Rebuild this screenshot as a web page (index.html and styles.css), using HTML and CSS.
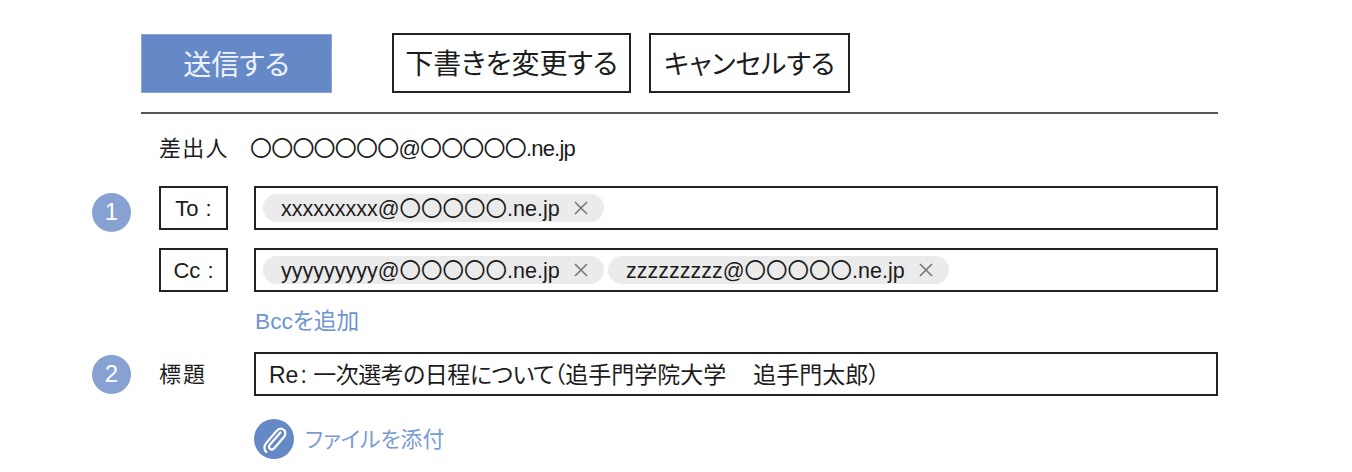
FILE: index.html
```html
<!DOCTYPE html>
<html lang="ja">
<head>
<meta charset="utf-8">
<title>メール</title>
<link rel="stylesheet" href="styles.css">
</head>
<body>
<main class="page">
  <div class="toolbar">
    <button class="btn btn-primary">送信する</button>
    <button class="btn btn-draft">下書きを変更する</button>
    <button class="btn btn-cancel">キャンセルする</button>
  </div>
  <div class="sender">
    <span class="sender-label">差出人</span>
    <span class="sender-value">〇〇〇〇〇〇〇@〇〇〇〇〇.ne.jp</span>
  </div>
  <div class="row row-to">
    <span class="badge badge-low">1</span>
    <span class="label label-box"><span class="label-text">To<span class="colon">:</span></span></span>
    <div class="field">
      <span class="chip"><span class="chip-text">xxxxxxxxx@〇〇〇〇〇.ne.jp</span><svg class="chip-x" viewBox="0 0 14 14"><path d="M1 1 13 13M13 1 1 13"/></svg></span>
    </div>
  </div>
  <div class="row row-cc">
    <span class="badge badge-empty"></span>
    <span class="label label-box"><span class="label-text">Cc<span class="colon">:</span></span></span>
    <div class="field">
      <span class="chip"><span class="chip-text">yyyyyyyyy@〇〇〇〇〇.ne.jp</span><svg class="chip-x" viewBox="0 0 14 14"><path d="M1 1 13 13M13 1 1 13"/></svg></span>
      <span class="chip"><span class="chip-text">zzzzzzzzz@〇〇〇〇〇.ne.jp</span><svg class="chip-x" viewBox="0 0 14 14"><path d="M1 1 13 13M13 1 1 13"/></svg></span>
    </div>
  </div>
  <a class="bcc">Bccを追加</a>
  <div class="row row-subject">
    <span class="badge">2</span>
    <span class="label label-plain"><span class="label-lift">標題</span></span>
    <div class="field field-subject"><span class="subject-text">Re<span class="subject-colon">:</span> <span class="subject-kana">一次選考の日程について</span>（追手門学院大学　<span class="subject-name">追手門太郎</span>）</span></div>
  </div>
  <div class="attach">
    <span class="attach-icon">
      <svg viewBox="0 0 40 40"><path d="M26.500 13.500 16 25.500c-1.600 1.900-1 3.600 0 4.400 1.200 1 3 .9 4.500-.8l9-10.600c2.600-3 2.300-5.900.3-7.600-2.200-1.800-5-1.500-7.500 1.400l-9.800 11.300c-3 3.500-2.700 7.300-.1 9.500"/></svg>
    </span>
    <span class="attach-text">ファイルを添付</span>
  </div>
</main>
</body>
</html>
```
FILE: styles.css
```css
* { box-sizing: border-box; }
html, body { margin: 0; padding: 0; background: #fff; }
body {
  width: 1352px;
  height: 472px;
  overflow: hidden;
  font-family: "Liberation Sans", "Noto Sans CJK JP", sans-serif;
  font-feature-settings: "palt";
  color: #1c1c1c;
}
.page {
  margin-left: 92px;
  width: 1126px;
  padding-top: 33px;
}
.toolbar {
  margin-left: 49px;
  display: flex;
  align-items: flex-end;
  height: 81px;
  padding-bottom: 19px;
  border-bottom: 2px solid #555;
}
.btn {
  height: 60px;
  font-family: inherit;
  font-feature-settings: "palt";
  font-size: 28px;
  padding: 0 0 2px;
  background: #fff;
  color: #1c1c1c;
  border: 2px solid #222;
}
.btn-primary {
  width: 191px;
  height: 59px;
  background: #6489c6;
  color: #eef2f9;
  border: 1px solid #8aa6d4;
}
.btn-draft { width: 239px; margin-left: 60px; }
.btn-cancel { width: 201px; margin-left: 18px; font-size: 27px; }
.sender {
  margin: 17px 0 0 67px;
  height: 30px;
  display: flex;
  align-items: center;
  font-size: 22px;
}
.sender-label { width: 91px; letter-spacing: 1.3px; }
.sender-value { letter-spacing: -.8px; }
.row {
  display: flex;
  align-items: center;
  height: 44px;
}
.row-to { margin-top: 25px; }
.row-cc { margin-top: 18px; }
.row-subject { margin-top: 16px; }
.badge {
  width: 39px;
  height: 39px;
  margin-right: 28px;
  flex: none;
  border-radius: 50%;
  background: #86a1d2;
  color: #fff;
  font-size: 24px;
  display: flex;
  align-items: center;
  justify-content: center;
}
.badge-low { margin-top: 8px; }
.badge-empty { background: none; }
.label {
  width: 69px;
  height: 44px;
  margin-right: 26px;
  font-size: 22px;
  display: flex;
  align-items: center;
}
.label-box {
  border: 2px solid #222;
  justify-content: center;
}
.label-text { padding-top: 1px; }
.label-lift { padding-bottom: 4px; letter-spacing: 2px; }
.colon { margin-left: 7px; }
.field {
  width: 964px;
  height: 44px;
  border: 2px solid #222;
  display: flex;
  align-items: center;
  gap: 4px;
  padding-left: 7px;
}
.field-subject {
  padding-left: 13px;
  font-size: 23px;
  white-space: pre;
}
.subject-text { padding-bottom: 3px; }
.subject-colon { margin-left: 2px; }
.subject-kana { letter-spacing: -.5px; }
.subject-name { margin-left: 4px; }
.chip {
  width: 341px;
  height: 28px;
  border-radius: 14px;
  background: #ebebeb;
  display: flex;
  align-items: center;
  padding-left: 18px;
  font-size: 21.5px;
  white-space: nowrap;
}
.chip-text { width: 293px; padding-bottom: 3px; }
.chip-x {
  width: 14px;
  height: 14px;
  fill: none;
  stroke: #777;
  stroke-width: 1.6;
}
.bcc {
  display: block;
  margin: 14px 0 0 163px;
  height: 30px;
  line-height: 30px;
  font-size: 22.7px;
  color: #6f95cf;
}
.attach {
  margin: 23px 0 0 162px;
  display: flex;
  align-items: center;
  height: 40px;
}
.attach-icon {
  width: 40px;
  height: 40px;
  border-radius: 50%;
  background: #6489c6;
  margin-right: 11px;
}
.attach-icon svg {
  display: block;
  width: 40px;
  height: 40px;
  fill: none;
  stroke: #fff;
  stroke-width: 2.2;
  stroke-linecap: round;
}
.attach-text {
  font-size: 21.8px;
  color: #7b9cd2;
  padding-bottom: 4px;
}
```
